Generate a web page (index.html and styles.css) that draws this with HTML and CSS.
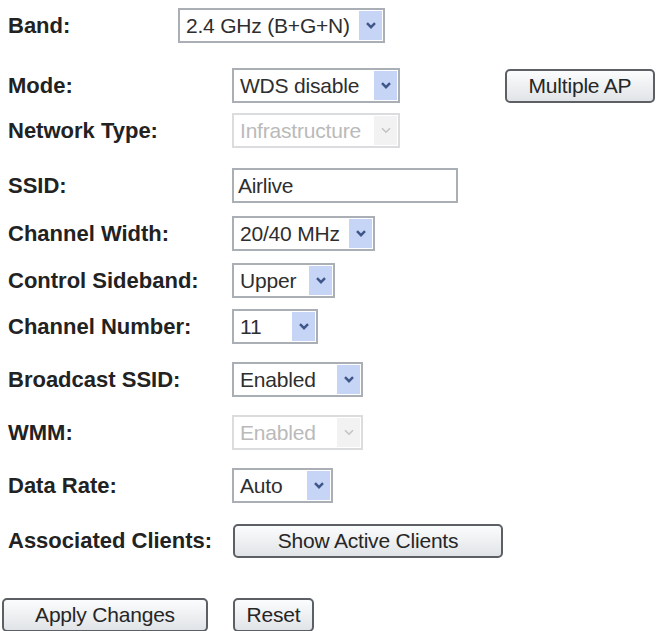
FILE: index.html
```html
<!DOCTYPE html>
<html lang="en">
<head>
    <meta charset="UTF-8">
    <meta name="viewport" content="width=device-width, initial-scale=1.0">
    <title>Wireless Basic Settings</title>
    <link rel="stylesheet" href="styles.css">
</head>
<body>
    <form id="wlan-form" class="wlan-form">
        <div class="row sp-25">
            <label class="lbl lbl-narrow">Band:</label>
            <div class="select sel-band">
                <span class="value">2.4 GHz (B+G+N)</span>
                <span class="arrow"><svg viewBox="0 0 10 7" width="10" height="7"><path d="M1 1.2 L5 5.2 L9 1.2" /></svg></span>
            </div>
        </div>
        <div class="row sp-10">
            <label class="lbl">Mode:</label>
            <div class="select sel-mode">
                <span class="value">WDS disable</span>
                <span class="arrow"><svg viewBox="0 0 10 7" width="10" height="7"><path d="M1 1.2 L5 5.2 L9 1.2" /></svg></span>
            </div>
            <button type="button" class="btn btn-ap">Multiple AP</button>
        </div>
        <div class="row sp-20">
            <label class="lbl">Network Type:</label>
            <div class="select sel-mode disabled">
                <span class="value">Infrastructure</span>
                <span class="arrow"><svg viewBox="0 0 10 7" width="10" height="7"><path d="M1 1.2 L5 5.2 L9 1.2" /></svg></span>
            </div>
        </div>
        <div class="row sp-13">
            <label class="lbl">SSID:</label>
            <input type="text" class="text-input" name="ssid" value="Airlive">
        </div>
        <div class="row sp-12">
            <label class="lbl">Channel Width:</label>
            <div class="select sel-width">
                <span class="value">20/40 MHz</span>
                <span class="arrow"><svg viewBox="0 0 10 7" width="10" height="7"><path d="M1 1.2 L5 5.2 L9 1.2" /></svg></span>
            </div>
        </div>
        <div class="row sp-11">
            <label class="lbl">Control Sideband:</label>
            <div class="select sel-side">
                <span class="value">Upper</span>
                <span class="arrow"><svg viewBox="0 0 10 7" width="10" height="7"><path d="M1 1.2 L5 5.2 L9 1.2" /></svg></span>
            </div>
        </div>
        <div class="row sp-18">
            <label class="lbl">Channel Number:</label>
            <div class="select sel-chan">
                <span class="value">11</span>
                <span class="arrow"><svg viewBox="0 0 10 7" width="10" height="7"><path d="M1 1.2 L5 5.2 L9 1.2" /></svg></span>
            </div>
        </div>
        <div class="row sp-18">
            <label class="lbl">Broadcast SSID:</label>
            <div class="select sel-enabled">
                <span class="value">Enabled</span>
                <span class="arrow"><svg viewBox="0 0 10 7" width="10" height="7"><path d="M1 1.2 L5 5.2 L9 1.2" /></svg></span>
            </div>
        </div>
        <div class="row sp-18">
            <label class="lbl">WMM:</label>
            <div class="select sel-enabled disabled">
                <span class="value">Enabled</span>
                <span class="arrow"><svg viewBox="0 0 10 7" width="10" height="7"><path d="M1 1.2 L5 5.2 L9 1.2" /></svg></span>
            </div>
        </div>
        <div class="row sp-20">
            <label class="lbl">Data Rate:</label>
            <div class="select sel-rate">
                <span class="value">Auto</span>
                <span class="arrow"><svg viewBox="0 0 10 7" width="10" height="7"><path d="M1 1.2 L5 5.2 L9 1.2" /></svg></span>
            </div>
        </div>
        <div class="row sp-40">
            <label class="lbl">Associated Clients:</label>
            <button type="button" class="btn btn-clients">Show Active Clients</button>
        </div>
        <div class="row actions">
            <button type="submit" class="btn btn-apply">Apply Changes</button>
            <button type="reset" class="btn btn-reset">Reset</button>
        </div>
    </form>
</body>
</html>
```

FILE: styles.css
```css
body {
    font-family: "Liberation Sans", Arial, sans-serif;
    background-color: #ffffff;
    color: #222;
    margin: 0;
    padding-top: 8px;
}
.wlan-form {
    display: flex;
    flex-direction: column;
}
.row {
    display: flex;
    align-items: center;
    height: 35px;
    padding-left: 8px;
}
.sp-10 { margin-bottom: 10px; }
.sp-11 { margin-bottom: 11px; }
.sp-12 { margin-bottom: 12px; }
.sp-13 { margin-bottom: 13px; }
.sp-18 { margin-bottom: 18px; }
.sp-20 { margin-bottom: 20px; }
.sp-25 { margin-bottom: 25px; }
.sp-40 { margin-bottom: 39px; }

.lbl {
    width: 224px;
    flex-shrink: 0;
    font-size: 22px;
    font-weight: bold;
    color: #222;
}
.lbl-narrow {
    width: 170px;
}

/* drop-down boxes */
.select {
    box-sizing: border-box;
    height: 35px;
    display: flex;
    align-items: stretch;
    border: 2px solid #a9afb5;
    background-color: #ffffff;
    padding: 1px;
}
.select .value {
    flex: 1;
    display: flex;
    align-items: center;
    padding-left: 5px;
    font-size: 21px;
    color: #2e2e2e;
    letter-spacing: -0.2px;
    white-space: nowrap;
}
.select .arrow {
    width: 23px;
    display: flex;
    align-items: center;
    justify-content: center;
    background-color: #c6d4f6;
}
.select .arrow path {
    fill: none;
    stroke: #3e5688;
    stroke-width: 2.4;
}
.select.disabled {
    border-color: #dadcde;
}
.select.disabled .value {
    color: #bababa;
}
.select.disabled .arrow {
    background-color: #f2f2f2;
}
.select.disabled .arrow path {
    stroke: #c4c4c4;
    stroke-width: 1.6;
}
.sel-band { width: 207px; }
.sel-mode { width: 168px; }
.sel-width { width: 143px; }
.sel-side { width: 103px; }
.sel-chan { width: 86px; }
.sel-enabled { width: 131px; }
.sel-rate { width: 101px; }

.text-input {
    box-sizing: border-box;
    width: 226px;
    height: 35px;
    border: 2px solid #a9afb5;
    padding: 0 4px;
    font-family: inherit;
    font-size: 21px;
    color: #2e2e2e;
    letter-spacing: -0.3px;
}

/* buttons */
.btn {
    box-sizing: border-box;
    height: 34px;
    border: 2px solid #5c6064;
    border-radius: 5px;
    background: linear-gradient(#fbfcfd, #e1e4e7);
    font-family: inherit;
    font-size: 21px;
    color: #262626;
    letter-spacing: -0.2px;
    cursor: pointer;
}
.btn-ap {
    width: 150px;
    margin-left: auto;
    margin-right: 2px;
}
.btn-clients {
    width: 270px;
    margin-left: 1px;
}
.actions {
    padding-left: 2px;
}
.btn-apply {
    width: 206px;
}
.btn-reset {
    width: 81px;
    margin-left: 25px;
}
```
